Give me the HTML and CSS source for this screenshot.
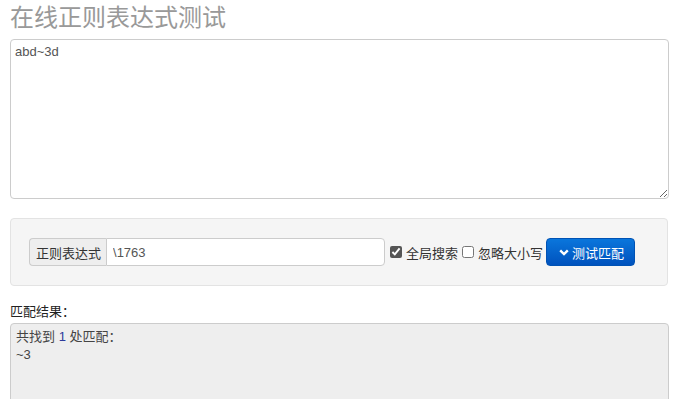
FILE: index.html
```html
<!DOCTYPE html>
<html lang="zh-CN">
<head>
  <meta charset="UTF-8">
  <title>在线正则表达式测试</title>
  <link rel="stylesheet" href="styles.css">
</head>
<body>
  <div class="page">
    <h1 class="title">在线正则表达式测试</h1>
    <textarea class="source" id="source">abd~3d</textarea>

    <div class="well">
      <div class="input-group">
        <span class="addon">正则表达式</span>
        <input class="regex" id="regex" type="text" value="\1763">
      </div>
      <label class="check"><input type="checkbox" id="global" checked>全局搜索</label>
      <label class="check"><input type="checkbox" id="ignore">忽略大小写</label>
      <button class="btn-primary" id="run">
        <svg class="chevron" width="10" height="7" viewBox="0 0 10 7"><path d="M1.2 1.3 L5 5 L8.8 1.3" fill="none" stroke="#fff" stroke-width="2.4"/></svg>测试匹配
      </button>
    </div>

    <div class="result-label">匹配结果：</div>
    <div class="result" id="result">共找到 <span class="count">1</span> 处匹配：<br>~3</div>
  </div>
</body>
</html>
```

FILE: styles.css
```css
body {
  margin: 0;
  font-family: "Liberation Sans", Arial, "Noto Sans CJK SC", sans-serif;
  font-size: 13px;
  color: #333;
  background: #fff;
}

.page {
  padding: 0 10px;
}

.title {
  margin: 0 0 4px;
  font-size: 24px;
  font-weight: normal;
  line-height: 35px;
  color: #999;
}

.source {
  display: block;
  box-sizing: border-box;
  width: 100%;
  height: 160px;
  margin: 0 0 19px;
  padding: 4px 4px;
  border: 1px solid #ccc;
  border-radius: 4px;
  font-family: inherit;
  font-size: 13px;
  color: #555;
  resize: vertical;
}

.well {
  display: flex;
  align-items: center;
  width: 658px;
  box-sizing: border-box;
  height: 68px;
  padding: 19px 18px;
  background: #f5f5f5;
  border: 1px solid #e3e3e3;
  border-radius: 4px;
}

.input-group {
  display: flex;
  height: 28px;
}

.addon {
  display: flex;
  align-items: center;
  padding: 0 5px 0 6px;
  background: #eee;
  border: 1px solid #ccc;
  border-right: none;
  border-radius: 4px 0 0 4px;
  color: #333;
}

.regex {
  box-sizing: border-box;
  width: 279px;
  height: 28px;
  padding: 4px 6px;
  border: 1px solid #ccc;
  border-radius: 0 4px 4px 0;
  font-family: inherit;
  font-size: 13px;
  color: #555;
  outline: none;
}

.check {
  display: flex;
  align-items: center;
  color: #333;
}

.check input {
  width: 12px;
  height: 12px;
  margin: 0 4px 0 5px;
  accent-color: #555;
}

.check + .check input {
  margin-left: 4px;
}

.btn-primary {
  display: flex;
  align-items: center;
  gap: 3px;
  height: 28px;
  margin-left: 3px;
  padding: 0 10px 0 12px;
  border: 1px solid #0052b4;
  border-radius: 4px;
  background: linear-gradient(#0a76dc, #0052bd);
  color: #fff;
  font-family: inherit;
  font-size: 13px;
  cursor: pointer;
}

.result-label {
  margin: 17px 0 3px;
  line-height: 17px;
  color: #222;
}

.result {
  box-sizing: border-box;
  height: 100px;
  padding: 4px 5px;
  background: #eee;
  border: 1px solid #ccc;
  border-radius: 4px;
  line-height: 18px;
  color: #444;
}

.count {
  color: #2d3a9a;
}
```
